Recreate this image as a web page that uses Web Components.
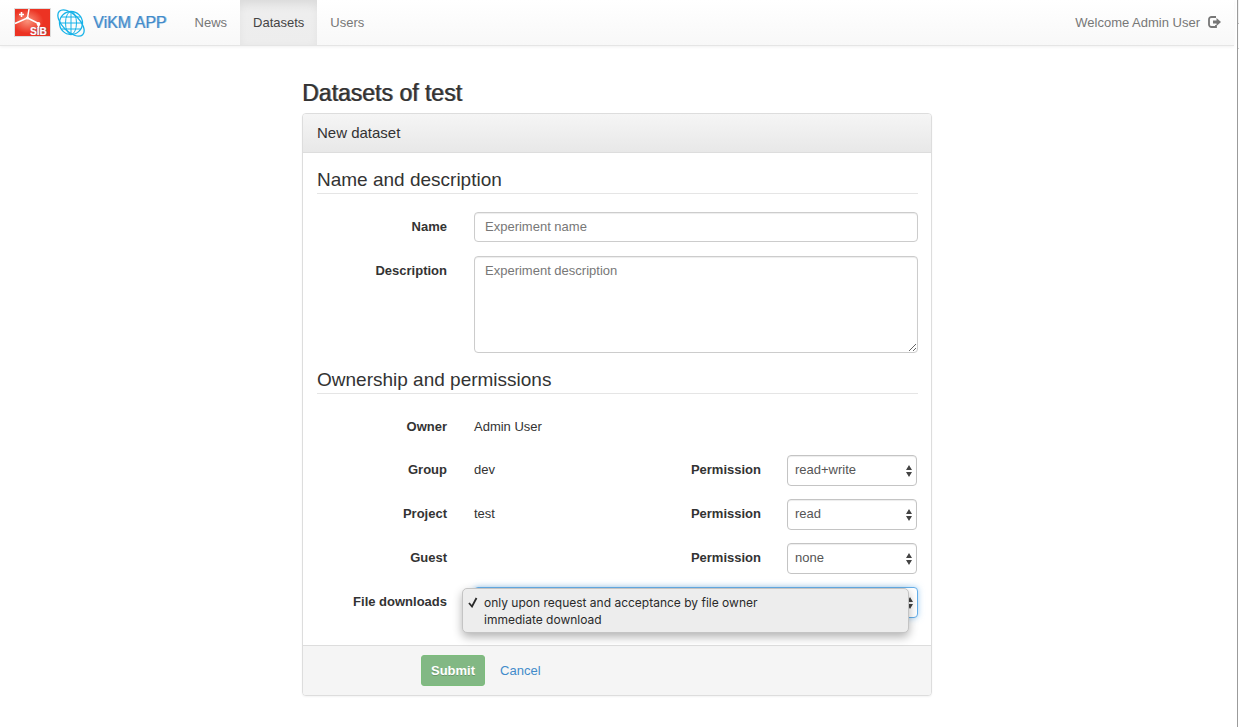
<!DOCTYPE html>
<html lang="en">
<head>
<meta charset="utf-8">
<meta name="viewport" content="width=device-width, initial-scale=1">
<title>ViKM APP</title>
<style>
html, body { height: 100%; }
body {
  margin: 0;
  background: #fff;
  color: #333;
  font: 13px/18px "Liberation Sans", Arial, sans-serif;
}
</style>
</head>
<body>
<vikm-app></vikm-app>

<template id="t-app">
<style>
:host { display: flex; min-height: 100%; }
.page { flex: 1; min-width: 0; }
.edge {
  flex: none; width: 1px; margin-left: 3px;
  border-left: 1px solid #9b9b9b;
  background: linear-gradient(#f1f1f1 23px, #bbb 23px 24px, #fafafa 24px 48px, #ccc 48px 49px, #fff 49px);
}
main { max-width: 630px; margin: 0 auto; padding: 34px 16px 32px; }
h1 {
  margin: 0 0 6px; font-size: 23px; line-height: 27px; font-weight: 400;
  text-shadow: 1px 0 rgba(51, 51, 51, .7);
}
</style>
<div class="page">
  <vikm-navbar></vikm-navbar>
  <main>
    <h1>Datasets of test</h1>
    <form-panel>
      <span slot="title">New dataset</span>
      <form-section heading="Name and description">
        <text-field label="Name" placeholder="Experiment name"></text-field>
        <text-field label="Description" placeholder="Experiment description" multiline></text-field>
      </form-section>
      <form-section heading="Ownership and permissions">
        <owner-row label="Owner">Admin User</owner-row>
        <owner-row label="Group" permission="read+write">dev</owner-row>
        <owner-row label="Project" permission="read">test</owner-row>
        <owner-row label="Guest" permission="none"></owner-row>
        <download-field></download-field>
      </form-section>
      <form-actions slot="footer"></form-actions>
    </form-panel>
  </main>
</div>
<div class="edge"></div>
</template>

<template id="t-navbar">
<style>
:host {
  display: flex; height: 45px; padding: 0 13px 0 14px;
  border-bottom: 1px solid #e5e5e5;
  background: linear-gradient(#fff, #f8f8f8);
  box-shadow: 0 1px 3px rgba(0, 0, 0, .06);
}
a { text-decoration: none; }
.brand {
  display: flex; align-items: center; margin-right: 15px;
  font-size: 16px; color: #428bca;
  text-shadow: 1px 0 rgba(66, 139, 202, .5);
}
.brand svg { display: block; }
.globe { margin: 0 8px 0 6px; }
nav { display: flex; flex: 1; }
.user { display: flex; align-items: center; gap: 8px; color: #777; }
.user svg { display: block; margin-bottom: 2px; }
</style>
<a class="brand" href="#">
  <svg width="37" height="29" viewBox="0 0 37 29" aria-hidden="true">
    <defs><radialGradient id="glow" cx=".36" cy=".45" r=".45"><stop offset="0" stop-color="#f9927a"/><stop offset="1" stop-color="#ec3323"/></radialGradient></defs>
    <rect width="37" height="29" fill="#ddd"/>
    <rect x="1" y="1" width="35" height="27" fill="url(#glow)"/>
    <path d="M1 15.500L13.500 10L15 1M13.500 10L24.500 15.500V20" fill="none" stroke="#fff" stroke-width="1.500"/>
    <circle cx="13.500" cy="10" r="1.600" fill="#fff"/><circle cx="24.500" cy="16" r="1.900" fill="#fff"/>
    <path d="M7.500 4v5M5 6.500h5" stroke="#fff" stroke-width="1.600"/>
    <text x="16" y="27" font-family="Liberation Sans, Arial, sans-serif" font-weight="700" font-size="10" fill="#fff">SIB</text>
  </svg>
  <svg class="globe" width="28" height="28" viewBox="0 0 28 28" fill="none" stroke="#17b2e8" aria-hidden="true">
    <circle cx="14" cy="14" r="11.500" stroke-width="1.300"/>
    <ellipse cx="14" cy="14" rx="5.500" ry="11.500"/>
    <path d="M14 2.500v23M2.500 14h23M4.500 8h19M4.500 20h19"/>
    <ellipse cx="14" cy="14" rx="16.500" ry="8.500" transform="rotate(45 14 14)" stroke-width="1.300"/>
  </svg>
  <span>ViKM APP</span>
</a>
<nav>
  <nav-item>News</nav-item>
  <nav-item active>Datasets</nav-item>
  <nav-item>Users</nav-item>
</nav>
<a class="user" href="#">
  <span>Welcome Admin User</span>
  <svg width="13" height="12" viewBox="0 0 13 12" aria-hidden="true">
    <path d="M8 1H3.500A2.500 2.500 0 0 0 1 3.500V8.500A2.500 2.500 0 0 0 3.500 11H8V9" fill="none" stroke="#777" stroke-width="1.800"/>
    <path d="M5 4.500H8.500V2L13 6L8.500 10V7.500H5Z" fill="#777"/>
  </svg>
</a>
</template>

<template id="t-nav-item">
<style>
:host { display: flex; }
a { padding: 0 13px; line-height: 45px; color: #777; text-decoration: none; }
:host([active]) a {
  color: #444;
  background: linear-gradient(#e6e6e6, #eee 30%, #ededed);
  box-shadow: inset 0 3px 9px rgba(0, 0, 0, .05);
}
</style>
<a href="#"><slot></slot></a>
</template>

<template id="t-panel">
<style>
:host {
  display: block; border: 1px solid #ddd; border-radius: 4px;
  background: #fff; box-shadow: 0 1px 2px rgba(0, 0, 0, .05);
}
h2 {
  margin: 0; padding: 10px 14px; border-bottom: 1px solid #ddd;
  border-radius: 3px 3px 0 0;
  background: linear-gradient(#f5f5f5, #e8e8e8);
  font-size: 15px; line-height: 18px; font-weight: 400;
}
.body { padding: 14px 13px 27px 14px; }
footer { padding: 9px 14px; border-top: 1px solid #ddd; border-radius: 0 0 3px 3px; background: #f5f5f5; }
</style>
<h2><slot name="title"></slot></h2>
<div class="body"><slot></slot></div>
<footer><slot name="footer"></slot></footer>
</template>

<template id="t-section">
<style>
:host { display: block; }
:host(:not(:last-of-type)) { margin-bottom: 14px; }
fieldset { margin: 0; padding: 0; border: 0; min-width: 0; }
legend {
  box-sizing: border-box; width: 100%; margin-bottom: 18px; padding: 0;
  border-bottom: 1px solid #e5e5e5; font-size: 19px; line-height: 26px;
}
.rows { display: flex; flex-direction: column; gap: 13px; }
</style>
<fieldset>
  <legend></legend>
  <div class="rows"><slot></slot></div>
</fieldset>
</template>

<template id="t-actions">
<style>
:host { display: flex; align-items: center; gap: 15px; padding-left: 104px; }
button {
  height: 31px; padding: 0 9px; border: 1px solid #7cbd7c; border-radius: 3px;
  background: #82b884; color: #fff; font: bold 13px/18px "Liberation Sans", Arial, sans-serif;
  text-shadow: 0 1px 0 rgba(0, 0, 0, .2);
}
a { color: #428bca; text-decoration: none; }
</style>
<button type="button">Submit</button>
<a href="#">Cancel</a>
</template>

<script>
const FIELD_CSS = `
:host { display: block; }
.row {
  display: grid; grid-template-columns: 130px minmax(0, 1fr);
  column-gap: 27px; align-items: start;
}
label, .label { padding-top: 6px; text-align: right; font-weight: 700; }
input, textarea, select {
  display: block; box-sizing: border-box; width: 100%; margin: 0;
  border: 1px solid #ccc; border-radius: 4px; background-color: #fff; color: #555;
  box-shadow: inset 0 1px 1px rgba(0, 0, 0, .075);
  font: 13px/18px "Liberation Sans", Arial, sans-serif;
}
input { height: 30px; padding: 4px 10px 6px; margin-bottom: 1px; }
textarea { height: 97px; padding: 5px 10px; }
::placeholder { color: #777; opacity: 1; }
select {
  height: 31px; padding: 0 18px 2px 7px; appearance: none; border-color: #c4c4c4;
  background-image: url("data:image/svg+xml,%3Csvg xmlns='http://www.w3.org/2000/svg' width='6' height='12'%3E%3Cpath d='M0 5L3 0L6 5ZM0 7L3 12L6 7Z' fill='%23444'/%3E%3C/svg%3E");
  background-repeat: no-repeat; background-position: right 4px center;
}
`;

function fromTemplate(tag, id, init) {
  customElements.define(tag, class extends HTMLElement {
    connectedCallback() {
      if (this.shadowRoot) return;
      const root = this.attachShadow({ mode: 'open' });
      root.append(document.getElementById(id).content.cloneNode(true));
      if (init) init(this, root);
    }
  });
}

class FieldElement extends HTMLElement {
  connectedCallback() {
    if (this.shadowRoot) return;
    const root = this.attachShadow({ mode: 'open' });
    root.innerHTML = `<style>${FIELD_CSS}</style>${this.render()}`;
  }
}

customElements.define('text-field', class extends FieldElement {
  render() {
    const hint = this.getAttribute('placeholder');
    const control = this.hasAttribute('multiline')
      ? `<textarea id="control" placeholder="${hint}"></textarea>`
      : `<input id="control" type="text" placeholder="${hint}">`;
    return `<div class="row"><label for="control">${this.getAttribute('label')}</label>${control}</div>`;
  }
});

customElements.define('owner-row', class extends FieldElement {
  render() {
    const permission = this.getAttribute('permission');
    const options = ['none', 'read', 'read+write']
      .map(o => `<option${o === permission ? ' selected' : ''}>${o}</option>`).join('');
    return `<style>
      .value { display: flex; }
      .text { flex: 1; min-height: 18px; padding: 6px 0; }
      .permission { display: grid; grid-template-columns: auto 130px; column-gap: 26px; padding-right: 1px; }
    </style>
    <div class="row">
      <span class="label">${this.getAttribute('label')}</span>
      <div class="value">
        <span class="text"><slot></slot></span>
        ${permission ? `<div class="permission"><label for="permission">Permission</label><select id="permission">${options}</select></div>` : ''}
      </div>
    </div>`;
  }
});

customElements.define('download-field', class extends FieldElement {
  render() {
    return `<style>
      .anchor { position: relative; }
      select { border-color: #66afe9; box-shadow: 0 0 6px rgba(102, 175, 233, .6); }
      ul {
        position: absolute; top: 1px; left: -12px; right: 9px; box-sizing: border-box;
        margin: 0; padding: 5px 0 4px; list-style: none;
        border: 1px solid #c4c4c4; border-radius: 5px; background: #ededed; color: #2a2a2a;
        box-shadow: 0 4px 10px rgba(0, 0, 0, .3);
        font: 12px/17px Inter, "Liberation Sans", sans-serif;
      }
      li { display: flex; align-items: center; padding-left: 21px; }
      li[aria-selected=true] { padding-left: 5px; }
      li svg { margin-right: 6px; }
    </style>
    <div class="row">
      <label for="downloads">File downloads</label>
      <div class="anchor">
        <select id="downloads">
          <option selected>only upon request and acceptance by file owner</option>
          <option>immediate download</option>
        </select>
        <ul role="listbox" aria-label="File downloads">
          <li role="option" aria-selected="true"><svg width="10" height="11" viewBox="0 0 10 11" aria-hidden="true"><path d="M1 6L4 9.500L8.500 1" fill="none" stroke="#2a2a2a" stroke-width="1.800"/></svg>only upon request and acceptance by file owner</li>
          <li role="option" aria-selected="false">immediate download</li>
        </ul>
      </div>
    </div>`;
  }
});

fromTemplate('nav-item', 't-nav-item');
fromTemplate('vikm-navbar', 't-navbar');
fromTemplate('form-section', 't-section', (el, root) => {
  root.querySelector('legend').textContent = el.getAttribute('heading');
});
fromTemplate('form-actions', 't-actions');
fromTemplate('form-panel', 't-panel');
fromTemplate('vikm-app', 't-app');
</script>
</body>
</html>
